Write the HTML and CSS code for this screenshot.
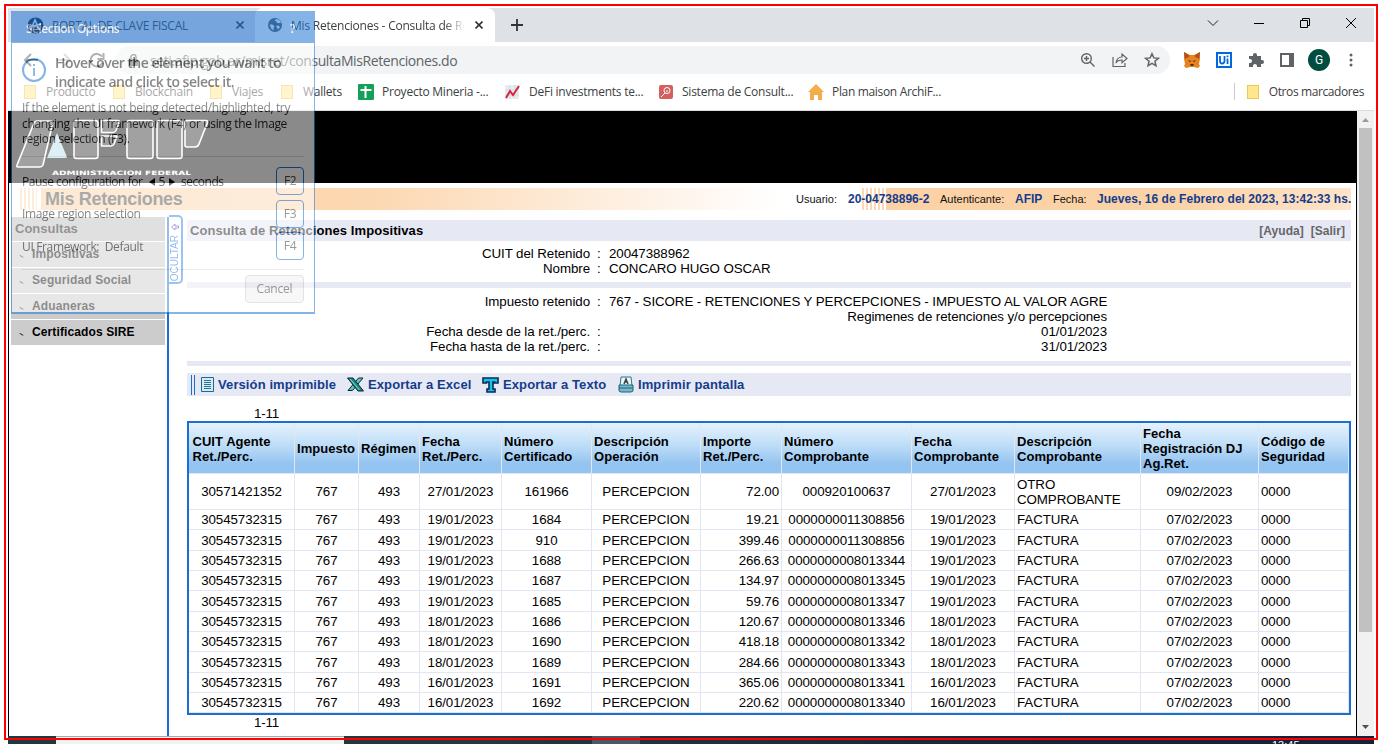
FILE: index.html
```html
<!DOCTYPE html>
<html lang="es">
<head>
<meta charset="utf-8">
<title>Mis Retenciones - Consulta de Retenciones</title>
<link rel="stylesheet" href="styles.css">
</head>
<body>
<div class="screen">
  <div class="browser">
    <div class="tabs">
      <div class="tab tab-portal">
        <svg width="17" height="17" viewBox="0 0 17 17"><circle cx="8.500" cy="8.500" r="8" fill="#14233c"/><path d="M3.500 13 8 3l4.500 10M2 10l12-3" stroke="#fff" stroke-width="1.600" fill="none"/></svg>
        <span class="tab-title portal-title">PORTAL DE CLAVE FISCAL</span>
        <svg class="tab-x" width="8" height="8" viewBox="0 0 8 8"><path d="M.5.5l7 7M7.500.5l-7 7" stroke="#333" stroke-width="1.600"/></svg>
      </div>
      <div class="tab tab-active">
        <svg width="14" height="14" viewBox="0 0 14 14"><circle cx="7" cy="7" r="7" fill="#555d66"/><path d="M1.500 6.500h3l2 2-1 1.500v2.500l-2-1.500zM6 2.500l2 .5 1 2 4 0-1-2.500-3-1.500zM8 8l2.500-.5L12 9l-2 2.500z" fill="#fff"/></svg>
        <span class="tab-title active-title">Mis Retenciones - Consulta de Retenciones</span>
        <svg class="tab-x" width="8" height="8" viewBox="0 0 8 8"><path d="M.5.5l7 7M7.500.5l-7 7" stroke="#333" stroke-width="1.600"/></svg>
      </div>
      <svg class="newtab" width="12" height="12" viewBox="0 0 12 12"><path d="M6 0v12M0 6h12" stroke="#333" stroke-width="1.800"/></svg>
      <div class="window-buttons">
        <svg width="12" height="12" viewBox="0 0 12 12"><path d="M1 3.500l5 5 5-5" stroke="#222" fill="none"/></svg>
        <svg width="12" height="12" viewBox="0 0 12 12"><path d="M1 6.500h10" stroke="#000"/></svg>
        <svg width="12" height="12" viewBox="0 0 12 12"><path d="M1.500 3.500h7v7h-7zM3.500 3V1.500h7v7H9" stroke="#000" fill="none"/></svg>
        <svg width="12" height="12" viewBox="0 0 12 12"><path d="M1 1l10 10M11 1L1 11" stroke="#000"/></svg>
      </div>
    </div>
    <div class="toolbar">
      <div class="nav">
        <svg width="16" height="16" viewBox="0 0 16 16"><path d="M15 8H2M8 2L2 8l6 6" stroke="#555" stroke-width="2" fill="none"/></svg>
        <svg width="16" height="16" viewBox="0 0 16 16"><path d="M1 8h13M8 2l6 6-6 6" stroke="#bbb" stroke-width="2" fill="none"/></svg>
        <svg width="16" height="16" viewBox="0 0 16 16"><path d="M13.500 11A6.300 6.300 0 1 1 13 4.500M14.500 1v6h-6" stroke="#555" stroke-width="2" fill="none"/></svg>
      </div>
      <div class="address">
        <svg class="lock" width="9" height="12" viewBox="0 0 9 12"><rect y="5" width="9" height="7" rx="1" fill="#555"/><path d="M2 5V3a2.500 2.500 0 0 1 5 0v2" stroke="#555" stroke-width="1.400" fill="none"/></svg>
        <span class="url">seti.afip.gob.ar/misret/consultaMisRetenciones.do</span>
        <div class="address-icons">
          <svg width="16" height="16" viewBox="0 0 16 16" fill="none" stroke="#5f6368" stroke-width="1.400"><circle cx="6.500" cy="6.500" r="4.800"/><path d="M10 10l4.500 4.500M4 6.500h5M6.500 4v5"/></svg>
          <svg width="16" height="16" viewBox="0 0 16 16" fill="none" stroke="#5f6368" stroke-width="1.200"><path d="M1 5v9.500h12V11M4 11c.5-4 3-6 6-6V2l5 4.500-5 4.300V8c-3 0-5 1-6 3z"/></svg>
          <svg width="16" height="16" viewBox="0 0 16 16" fill="none" stroke="#5f6368" stroke-width="1.500"><path d="M8 1.700l1.800 4.200 4.600.4-3.500 3 1.100 4.500L8 11.400l-4 2.400 1.100-4.500-3.500-3 4.600-.4z"/></svg>
        </div>
      </div>
      <div class="extensions">
        <svg width="16" height="16" viewBox="0 0 16 16"><path d="M0 0l6 3h4l6-3v7l-1 5 1 2-2 2-4-1H6l-4 1-2-2 1-2-1-5z" fill="#e8821e"/><path d="M0 0l6 4-5 3zM16 0l-6 4 5 3z" fill="#ad4f1f"/><path d="M4 8l3 1-1 1zM12 8L9 9l1 1z" fill="#222"/><path d="M6 12h4l-1 2H7z" fill="#483327"/></svg>
        <svg width="16" height="16" viewBox="0 0 16 16"><path fill="#fff" stroke="#0067df" stroke-width="2" d="M1 1h14v14H1z"/><path d="M4 4v5q0 2.500 2.200 2.500T8.500 9V4M11.500 6.500V12M11.500 3.500v1.800" stroke="#0067df" stroke-width="1.800" fill="none"/></svg>
        <svg width="16" height="16" viewBox="0 0 16 16"><path d="M1 4h4V3a2 2 0 0 1 4 0v1h4v4h1a2 2 0 0 1 0 4h-1v3H9v-1a2 2 0 0 0-4 0v1H1v-4h1a2 2 0 0 0 0-4H1z" fill="#5f6368"/></svg>
        <svg width="14" height="14" viewBox="0 0 14 14"><path fill="#fff" stroke="#5f6368" stroke-width="2" d="M1 1h12v12H1z"/><path d="M9 1h5v12H9z" fill="#5f6368"/></svg>
        <span class="avatar">G</span>
        <svg width="4" height="14" viewBox="0 0 4 14" fill="#5f6368"><circle cx="2" cy="2" r="1.500"/><circle cx="2" cy="7" r="1.500"/><circle cx="2" cy="12" r="1.500"/></svg>
      </div>
    </div>
    <div class="bookmarks">
      <div class="bm bm1"><i class="folder"></i><span>Producto</span></div>
      <div class="bm bm2"><i class="folder"></i><span>Blockchain</span></div>
      <div class="bm bm3"><i class="folder"></i><span>Viajes</span></div>
      <div class="bm bm4"><i class="folder"></i><span>Wallets</span></div>
      <div class="bm bm5"><svg width="16" height="16" viewBox="0 0 16 16"><rect width="16" height="16" rx="1" fill="#14a05a"/><path d="M7.500 2v12M2.500 6h11" stroke="#fff" stroke-width="2"/></svg><span>Proyecto Mineria -...</span></div>
      <div class="bm bm6"><svg width="15" height="16" viewBox="0 0 15 16"><rect y="1" width="14" height="14" fill="#e4edf2"/><path d="M5 1v14M10 1v14M0 6h14M0 11h14" stroke="#c8d5dc" stroke-width=".6"/><path d="M1 14l4-7 3 4 6-9" stroke="#dc2340" stroke-width="2" fill="none"/></svg><span>DeFi investments te...</span></div>
      <div class="bm bm7"><svg width="14" height="14" viewBox="0 0 14 14"><rect width="14" height="14" rx="2" fill="#d2605e"/><circle cx="8" cy="5.500" r="3" fill="none" stroke="#fff"/><path d="M6 8l-4 4M7 6h2" stroke="#fff"/></svg><span>Sistema de Consult...</span></div>
      <div class="bm bm8"><svg width="16" height="16" viewBox="0 0 16 16"><path d="M8 0l8 8h-2v8h-4v-5H6v5H2V8H0z" fill="#f3ad4c"/></svg><span>Plan maison ArchiF...</span></div>
      <div class="bm bm-other"><i class="folder"></i><span>Otros marcadores</span></div>
    </div>
  </div>

  <div class="viewport">
    <div class="page">
      <div class="masthead">
        <svg class="afip" width="202" height="72" viewBox="0 0 202 72">
          <path d="M48 22l10 24q0 1-2 1H38z" fill="#b8dfeb"/>
          <g fill="#fff" fill-opacity=".2" stroke="#fff" stroke-width="1.600" stroke-linejoin="round">
            <path d="M28 10h13q3 0 2.500 3L34 54q-1 2-3 2H9q-2 0-1-2L25 12q1-2 3-2z"/>
            <rect x="65" y="9.500" width="24" height="38" rx="2.500"/>
            <path d="M92.500 9.500H109q2 0 1 2l-3 8q-1 2-3 2H92.500z"/>
            <path d="M92.500 25H108l-3 8q-1 2-3 2H92.500z"/>
            <rect x="118" y="9.500" width="26" height="38" rx="2.500"/>
            <rect x="148" y="9.500" width="25" height="38" rx="2.500"/>
            <path d="M178 9.500h19q2 0 1.500 2L190 33q-1 3-4 3h-8q-2 0-2-2V11.500q0-2 2-2z"/>
          </g>
          <text x="43" y="64" textLength="139" lengthAdjust="spacingAndGlyphs" fill="#fff" font-family="DejaVu Sans" font-weight="bold" font-size="6">ADMINISTRACION FEDERAL</text>
        </svg>
      </div>
      <div class="titlebar">
        <span class="stripes"></span>
        <div class="app-title">Mis Retenciones</div>
        <div class="session">
          <span class="u1">Usuario:</span><b class="u2">20-04738896-2</b><span class="u3">Autenticante:</span><b class="u4">AFIP</b><span class="u5">Fecha:</span><b class="u6">Jueves, 16 de Febrero del 2023, 13:42:33 hs.</b>
        </div>
      </div>
      <div class="columns">
        <div class="side">
          <div class="side-head">Consultas</div>
          <div class="side-item"><i></i>Impositivas</div>
          <div class="side-item"><i></i>Seguridad Social</div>
          <div class="side-item"><i></i>Aduaneras</div>
          <div class="side-item"><i></i>Certificados SIRE</div>
        </div>
        <div class="divider"><div class="hide-tab"><span>OCULTAR</span><svg width="8" height="8" viewBox="0 0 8 8"><path d="M.5 4L4 1v2h3.500v2H4v2z" fill="none" stroke="#5b23c8"/></svg></div></div>
        <div class="main">
          <div class="heading"><b>Consulta de Retenciones Impositivas</b><span>[Ayuda]&nbsp; [Salir]</span></div>
          <div class="form form-a">
            <div class="row"><span>CUIT del Retenido</span><i>:</i><span>20047388962</span></div>
            <div class="row"><span>Nombre</span><i>:</i><span>CONCARO HUGO OSCAR</span></div>
          </div>
          <div class="rule"></div>
          <div class="form form-b">
            <div class="row"><span>Impuesto retenido</span><i>:</i><span class="tax">767 - SICORE - RETENCIONES Y PERCEPCIONES - IMPUESTO AL VALOR AGRE</span></div>
            <div class="row"><span></span><i></i><span class="end">Regimenes de retenciones y/o percepciones</span></div>
            <div class="row"><span>Fecha desde de la ret./perc.</span><i>:</i><span class="end">01/01/2023</span></div>
            <div class="row"><span>Fecha hasta de la ret./perc.</span><i>:</i><span class="end">31/01/2023</span></div>
          </div>
          <div class="rule rule-b"></div>
          <div class="actions">
            <span class="grip"></span>
            <a class="a1"><svg width="13" height="15" viewBox="0 0 13 15"><path d="M.5.5h12v14H.5z" fill="#d5ebf2" stroke="#176a91"/><path d="M3 3.500h7M3 5.500h7M3 7.500h7M3 9.500h7M3 11.500h7" stroke="#2c7396"/></svg>Versión imprimible</a>
            <a class="a2"><svg width="17" height="15" viewBox="0 0 17 15"><path d="M1 13.500L11.500 1H16L5.500 13.500z" fill="#56ccbd" stroke="#123"/><path d="M.5 1H6l10.500 13H11z" fill="#1b8a86" stroke="#123"/><path d="M3 2l9.500 11" stroke="#7fe3d4"/></svg>Exportar a Excel</a>
            <a class="a3"><svg width="17" height="16" viewBox="0 0 17 16"><path d="M1 1h15v5h-3.500V5H11v7h2v3H5v-3h2V5H4.500v1H1z" fill="#14c4e4" stroke="#092b57" stroke-width="1.600"/></svg>Exportar a Texto</a>
            <a class="a4"><svg width="16" height="17" viewBox="0 0 16 17"><path d="M3 1h10l1 9H2z" fill="#e9f5f7" stroke="#287994"/><path d="M6 8l2-5 2 5M7 6h2" stroke="#444" stroke-width="1.500" fill="none"/><path d="M1 9h14v6l-2 1H3l-2-1z" fill="#7eb7ca" stroke="#17647f"/><path d="M1 12h14" stroke="#17647f"/></svg>Imprimir pantalla</a>
          </div>
          <div class="pager">1-11</div>
          <table class="grid">
            <thead><tr><th>CUIT Agente Ret./Perc.</th><th>Impuesto</th><th>Régimen</th><th>Fecha<br>Ret./Perc.</th><th>Número Certificado</th><th>Descripción Operación</th><th>Importe Ret./Perc.</th><th>Número Comprobante</th><th>Fecha Comprobante</th><th>Descripción Comprobante</th><th>Fecha Registración DJ Ag.Ret.</th><th>Código de Seguridad</th></tr></thead>
            <tbody>
              <tr class="tall"><td>30571421352</td><td>767</td><td>493</td><td>27/01/2023</td><td>161966</td><td>PERCEPCION</td><td>72.00</td><td>000920100637</td><td>27/01/2023</td><td>OTRO COMPROBANTE</td><td>09/02/2023</td><td>0000</td></tr>
              <tr><td>30545732315</td><td>767</td><td>493</td><td>19/01/2023</td><td>1684</td><td>PERCEPCION</td><td>19.21</td><td>0000000011308856</td><td>19/01/2023</td><td>FACTURA</td><td>07/02/2023</td><td>0000</td></tr>
              <tr><td>30545732315</td><td>767</td><td>493</td><td>19/01/2023</td><td>910</td><td>PERCEPCION</td><td>399.46</td><td>0000000011308856</td><td>19/01/2023</td><td>FACTURA</td><td>07/02/2023</td><td>0000</td></tr>
              <tr><td>30545732315</td><td>767</td><td>493</td><td>19/01/2023</td><td>1688</td><td>PERCEPCION</td><td>266.63</td><td>0000000008013344</td><td>19/01/2023</td><td>FACTURA</td><td>07/02/2023</td><td>0000</td></tr>
              <tr><td>30545732315</td><td>767</td><td>493</td><td>19/01/2023</td><td>1687</td><td>PERCEPCION</td><td>134.97</td><td>0000000008013345</td><td>19/01/2023</td><td>FACTURA</td><td>07/02/2023</td><td>0000</td></tr>
              <tr><td>30545732315</td><td>767</td><td>493</td><td>19/01/2023</td><td>1685</td><td>PERCEPCION</td><td>59.76</td><td>0000000008013347</td><td>19/01/2023</td><td>FACTURA</td><td>07/02/2023</td><td>0000</td></tr>
              <tr><td>30545732315</td><td>767</td><td>493</td><td>18/01/2023</td><td>1686</td><td>PERCEPCION</td><td>120.67</td><td>0000000008013346</td><td>18/01/2023</td><td>FACTURA</td><td>07/02/2023</td><td>0000</td></tr>
              <tr><td>30545732315</td><td>767</td><td>493</td><td>18/01/2023</td><td>1690</td><td>PERCEPCION</td><td>418.18</td><td>0000000008013342</td><td>18/01/2023</td><td>FACTURA</td><td>07/02/2023</td><td>0000</td></tr>
              <tr><td>30545732315</td><td>767</td><td>493</td><td>18/01/2023</td><td>1689</td><td>PERCEPCION</td><td>284.66</td><td>0000000008013343</td><td>18/01/2023</td><td>FACTURA</td><td>07/02/2023</td><td>0000</td></tr>
              <tr><td>30545732315</td><td>767</td><td>493</td><td>16/01/2023</td><td>1691</td><td>PERCEPCION</td><td>365.06</td><td>0000000008013341</td><td>16/01/2023</td><td>FACTURA</td><td>07/02/2023</td><td>0000</td></tr>
              <tr><td>30545732315</td><td>767</td><td>493</td><td>16/01/2023</td><td>1692</td><td>PERCEPCION</td><td>220.62</td><td>0000000008013340</td><td>16/01/2023</td><td>FACTURA</td><td>07/02/2023</td><td>0000</td></tr>
            </tbody>
          </table>
          <div class="pager">1-11</div>
        </div>
      </div>
    </div>
    <div class="scrollbar">
      <svg width="17" height="17" viewBox="0 0 17 17"><path d="M5 11l3.500-4 3.500 4z" fill="#9a9a9a"/></svg>
      <div class="thumb"></div>
      <svg class="down" width="17" height="17" viewBox="0 0 17 17"><path d="M5 6l3.500 4L12 6z" fill="#505050"/></svg>
    </div>
  </div>
  <div class="taskbar"><span class="task-window"></span><span class="task-active"></span><span class="clock">13:45</span></div>
</div>

<div class="overlay">
  <div class="ov-title"><b>Selection Options</b><b>?</b></div>
  <div class="ov-intro">
    <svg width="24" height="24" viewBox="0 0 24 24"><circle cx="12" cy="12" r="11" fill="none" stroke="#1d74d4" stroke-width="2"/><path d="M12 10v8M12 6v2" stroke="#1d74d4" stroke-width="1.800"/></svg>
    <div><span class="i1">Hover over the element you want to</span><span class="i2">indicate and click to select it.</span></div>
  </div>
  <div class="ov-help"><span class="h1">If the element is not being detected/highlighted, try</span><span class="h2">changing the UI framework (F4) or using the Image</span><span class="h3">region selection (F3).</span></div>
  <div class="ov-options">
    <div class="opt opt-pause"><span>Pause configuration for &nbsp;<svg width="8" height="8" viewBox="0 0 8 8"><path d="M7 0v8L1 4z"/></svg> 5 <svg width="8" height="8" viewBox="0 0 8 8"><path d="M1 0v8l6-4z"/></svg>&nbsp; seconds</span><kbd>F2</kbd></div>
    <div class="opt"><span>Image region selection</span><kbd>F3</kbd></div>
    <div class="opt"><span>UI Framework: &nbsp;Default</span><kbd>F4</kbd></div>
  </div>
  <div class="ov-foot"><span class="cancel">Cancel</span></div>
</div>
<div class="frame"></div>
</body>
</html>
```
FILE: styles.css
```css
* { box-sizing: border-box; }
body { margin: 0; width: 1382px; height: 744px; overflow: hidden; background: #fff; font-family: "Liberation Sans", Arial, sans-serif; position: relative; }
svg { display: block; flex: none; }
i { font-style: normal; }
.screen { margin: 8px 8px 0; width: 1366px; height: 736px; display: flex; flex-direction: column; overflow: hidden; }
.browser { height: 103px; border-bottom: 1px solid #dadce0; font-family: "Open Sans", "Noto Sans", sans-serif; font-size: 12px; color: #3c4043; flex: none; }

.tabs { height: 34px; background: #dee1e6; display: flex; align-items: center; }
.tab { display: flex; align-items: center; height: 34px; }
.tab-portal { width: 247px; padding: 0 11px 0 19px; }
.tab-title { white-space: nowrap; overflow: hidden; }
.portal-title { margin-left: 8px; flex: 1; letter-spacing: -.27px; }
.tab-active { width: 240px; background: #fff; border-radius: 8px 8px 0 0; padding: 0 12px 0 13px; }
.active-title { width: 174px; margin-left: 9px; letter-spacing: -.22px; -webkit-mask-image: linear-gradient(90deg, #000 88%, transparent); mask-image: linear-gradient(90deg, #000 88%, transparent); }
.tab-x { margin-left: auto; }
.newtab { margin-left: 16px; }
.window-buttons { margin-left: auto; display: flex; gap: 34px; padding: 0 17px 5px 0; }

.toolbar { height: 36px; display: flex; align-items: center; }
.nav { width: 108px; padding-left: 15px; display: flex; gap: 17px; }
.address { width: 1054px; height: 28px; border-radius: 14px; background: #f1f3f4; display: flex; align-items: center; }
.lock { margin-left: 13px; }
.url { margin-left: 12px; font-size: 14px; letter-spacing: -.41px; color: #5f6368; white-space: nowrap; }
.address-icons { margin-left: auto; display: flex; gap: 16px; padding-right: 10px; }
.extensions { display: flex; align-items: center; gap: 16px; padding-left: 14px; }
.avatar { width: 22px; height: 22px; border-radius: 50%; background: #004d40; color: #fff; font: 12px/22px Roboto, sans-serif; text-align: center; margin: 0 -1px 0 -2px; }
.extensions svg:last-child { margin-left: 4px; }

.bookmarks { height: 27px; display: flex; align-items: center; }
.bm { display: flex; align-items: center; gap: 8px; white-space: nowrap; letter-spacing: -.24px; flex: none; }
.bm1 { margin-left: 16px; width: 89px; }
.bm2 { width: 97px; } .bm3 { width: 71px; } .bm4 { width: 77px; } .bm5 { width: 147px; } .bm6 { width: 154px; gap: 9px; } .bm7 { width: 149px; gap: 9px; } .bm8 { width: 160px; letter-spacing: -.33px; }
.bm1, .bm2, .bm3, .bm4 { gap: 10px; }
.folder { width: 12px; height: 14px; background: #ffe78f; border: 1px solid #ecc954; }
.bm-other { margin-left: auto; border-left: 1px solid #c8cacd; padding: 0 10px 0 12px; gap: 10px; letter-spacing: -.4px; }

.viewport { height: 625px; display: flex; flex: none; }
.page { width: 1349px; border: solid #000; border-width: 0 1px; font-size: 13.33px; }
.masthead { height: 72px; background: #000; }
.titlebar { height: 22px; margin: 5px 5px 0 3px; display: flex; align-items: center; padding-left: 28px; background:
  linear-gradient(90deg, #fcd2a5, #fbd3a8 65%, #fee4ca) 874px 0/466px 22px no-repeat,
  repeating-linear-gradient(90deg, #fcd9b2 0 2px, #fff 2px 4px) 850px 0/22px 22px no-repeat,
  linear-gradient(90deg, #fcd2a5 0, #fcd8b2 45%, #fff 100%) 29px 0/740px 22px no-repeat; }
.stripes { width: 17px; height: 22px; background: repeating-linear-gradient(90deg, #fcd9b2 0 2px, #fff 2px 4px); margin-left: -20px; }
.app-title { font-size: 18px; font-weight: bold; color: #444; letter-spacing: -.3px; margin-left: 8px; }
.session { margin-left: auto; width: 555px; display: flex; font-size: 12px; align-items: center; white-space: nowrap; color: #111; }
.session b { color: #143c8c; }
.session > * { flex: none; }
.u1 { width: 52px; font-size: 11px; } .u2 { width: 92px; } .u3 { width: 75px; font-size: 11px; } .u4 { width: 38px; } .u5 { width: 44px; font-size: 11px; } .u6 { letter-spacing: .05px; }

.columns { display: flex; height: 519px; margin-top: 7px; }
.side { width: 156px; padding-left: 2px; font-weight: bold; font-size: 12px; }
.side-head { height: 24px; line-height: 24px; padding-left: 4px; background: #bdbdbd; color: #111; font-size: 13px; }
.side-item { height: 25px; margin-top: 1px; line-height: 25px; background: #ccc; display: flex; align-items: center; letter-spacing: .12px; }
.side-item i { width: 4px; height: 3px; border-bottom: 1px solid #222; margin: 2px 8px 0 9px; transform: rotate(30deg); }
.divider { width: 20px; margin-left: 2px; border-left: 2px solid #1a6fd0; }
.hide-tab { width: 14px; height: 69px; margin: -2px 0 0; border: 2px solid #2a80df; border-left-width: 0; border-radius: 0 5px 5px 0; background: #fff; display: flex; flex-direction: column-reverse; justify-content: flex-start; align-items: center; padding-bottom: 1px; gap: 4px; }
.hide-tab span { writing-mode: vertical-rl; transform: rotate(180deg); font-size: 10px; line-height: 12px; color: #1a6fd0; white-space: nowrap; }

.main { width: 1164px; }
.heading { margin-top: 3px; height: 21px; background: #e6e8f4; display: flex; align-items: center; justify-content: space-between; padding: 0 6px 0 3px; }
.heading b { letter-spacing: .08px; font-size: 13px; }
.heading span { color: #666; font-weight: bold; font-size: 12px; letter-spacing: .05px; }
.form-a { padding-top: 5px; height: 41px; }
.form-b { padding-top: 6px; height: 73px; }
.row { display: grid; grid-template-columns: 403px 19px 498px; height: 15px; line-height: 15px; white-space: nowrap; letter-spacing: -.08px; }
.row > span:first-child { text-align: right; }
.row i { padding-left: 7px; }
.row .end { text-align: right; }
.row .tax { letter-spacing: -.08px; }
.rule { height: 6px; background: #e6e8f4; }
.rule-b { height: 5px; }
.actions { margin-top: 7px; height: 23px; background: #e6e8f4; display: flex; align-items: center; font-weight: bold; font-size: 13px; color: #143c8c; letter-spacing: .1px; }
.grip { width: 4px; height: 20px; margin: 0 6px 0 4px; border: 1px solid #1a6fd0; border-width: 0 1px; }
.actions a { display: flex; align-items: center; gap: 4px; white-space: nowrap; flex: none; }
.a1 { width: 146px; } .a2 { width: 135px; } .a3 { width: 136px; }
.pager { padding-left: 67px; height: 15px; line-height: 15px; letter-spacing: -.15px; }
.actions + .pager { margin-top: 10px; }

.grid { display: block; width: 1164px; height: 294px; border: 2px solid #1a6fd0; border-spacing: 0; }
.grid thead, .grid tbody { display: block; }
.grid tr { display: grid; grid-template-columns: 106px 64px 61px 82px 90px 109px 81px 130px 103px 126px 118px 90px; height: 20.35px; }
.grid thead tr { height: 51px; background: linear-gradient(#e6f2fd, #bcdcf7 45%, #94c4f1 80%); }
.grid .tall { height: 36px; }
.grid th, .grid td { display: flex; align-items: center; justify-content: center; padding: 0 2px; border: solid #e3e5f2; border-width: 0 1px 1px 0; line-height: 15px; letter-spacing: -.08px; }
.grid th { justify-content: flex-start; text-align: left; padding-left: 2px; padding-top: 1px; font-size: 13px; letter-spacing: .04px; }
.grid th:first-child { padding-left: 3.500px; }
.grid td:nth-child(7) { justify-content: flex-end; }
.grid td:nth-child(10), .grid td:nth-child(12) { justify-content: flex-start; }

.scrollbar { width: 17px; background: #f1f1f1; display: flex; flex-direction: column; }
.thumb { margin: 0 2px; height: 504px; background: #c1c1c1; }
.down { margin-top: auto; }
.taskbar { height: 8px; flex: none; background: linear-gradient(90deg, #20383f, #24383e 35%, #182338 75%, #17213a); display: flex; align-items: flex-start; }
.task-window { margin-left: 48px; width: 288px; height: 8px; background: #f2f2f2; border-top: 1px solid #aaa; }
.task-active { margin-left: 248px; width: 48px; height: 8px; background: #4a5a64; }
.clock { margin-left: 632px; color: #fff; font-size: 11px; line-height: 11px; padding-top: 4px; }

.overlay { position: absolute; left: 11px; top: 11px; width: 304px; height: 303px; opacity: .54; background: #fff; border: 1px solid #1d74d4; border-bottom-width: 2px; font: 12px "Open Sans", "Noto Sans", sans-serif; color: #222; white-space: nowrap; }
.ov-title { height: 32px; background: #1d74d4; margin: -1px -1px 0; padding: 3px 20px 0 15px; display: flex; justify-content: space-between; align-items: center; color: #fff; font-weight: 600; letter-spacing: -.5px; }
.ov-title b { font-weight: 600; }
.ov-intro { display: flex; padding: 10px 0 0 10px; gap: 9px; height: 55px; font-size: 14px; font-weight: 600; letter-spacing: -.52px; }
.ov-intro svg { margin-top: 5px; }
.ov-intro span { display: block; line-height: 19px; }
.ov-intro .i2 { letter-spacing: -.48px; }
.ov-help { padding: 2px 0 0 10px; height: 58px; }
.ov-help span { display: block; line-height: 15.500px; letter-spacing: -.35px; }
.ov-options { margin: 0 10px; border-top: 1px solid #ddd; height: 113px; padding-top: 10px; }
.opt { display: flex; align-items: center; justify-content: space-between; height: 28px; margin-bottom: 4.500px; letter-spacing: -.35px; }
.opt-pause { letter-spacing: -.45px; }
.opt svg { display: inline-block; }
kbd { width: 28px; height: 28px; border: 1px solid #1d74d4; border-radius: 4px; font: inherit; line-height: 26px; text-align: center; color: #444; }
.ov-foot { margin: 0 10px; border-top: 1px solid #ddd; padding-top: 5px; display: flex; justify-content: flex-end; }
.cancel { width: 59px; height: 28px; border: 1px solid #ccc; border-radius: 4px; background: #f1f1f1; line-height: 26px; text-align: center; color: #444; letter-spacing: -.2px; }
.frame { position: absolute; left: 4px; top: 4px; width: 1374px; height: 736px; border: 2px solid #f00; pointer-events: none; }
```
